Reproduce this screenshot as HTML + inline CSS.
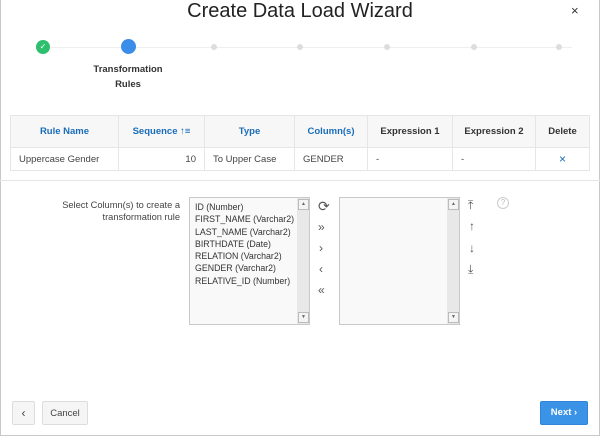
<!DOCTYPE html><html><head><style>
body{margin:0;width:600px;height:437px;background:#fff;font-family:"Liberation Sans",sans-serif;position:relative;overflow:hidden}
.frame{position:absolute;left:0;top:0;width:598px;height:435px;border:1px solid #c8c8c8;border-top:none}
.a{position:absolute}
h1{position:absolute;top:0;left:0;width:600px;text-align:center;margin:0;font-weight:normal;font-size:20px;color:#222;line-height:22px}
.dot{position:absolute;width:6px;height:6px;border-radius:3px;background:#ddd;top:44px}
table{position:absolute;left:10px;top:115px;width:580px;border-collapse:collapse;font-size:9.5px;table-layout:fixed}
td,th{border:1px solid #e6e6e6;padding:0 8px;overflow:hidden;white-space:nowrap}
th{background:#f7f7f7;color:#333;height:31px}
th.b{color:#1a6cb8}
td{height:22px;color:#444}
.lb{position:absolute;border:1px solid #c9c9c9;background:#f9f9f9;font-size:8.8px;color:#333;line-height:12.3px}
.sb{position:absolute;right:0;top:0;width:12px;height:100%;background:#e8e8e8}
.ar{position:absolute;left:1px;width:9px;height:9px;background:#f4f4f4;border:1px solid #bbb;font-size:5px;text-align:center;line-height:9px;color:#666}
.ic{position:absolute;font-size:12px;color:#555}
.btn{position:absolute;top:401px;height:22px;border:1px solid #ddd;border-radius:2px;background:#f5f5f5;font-size:9.5px;color:#444;text-align:center;line-height:22px}
</style></head><body><div class="frame"></div>
<h1>Create Data Load Wizard</h1>
<div class="a" style="left:571px;top:3px;font-size:13px;color:#333">×</div>
<div class="a" style="left:42px;top:47px;width:530px;height:1px;background:#eee"></div>
<div class="a" style="left:36px;top:40px;width:14px;height:14px;border-radius:7px;background:#2ebf6e;color:#fff;font-size:8px;text-align:center;line-height:14px">✓</div>
<div class="a" style="left:121px;top:39px;width:15px;height:15px;border-radius:8px;background:#3a8de8"></div>
<div class="dot" style="left:211px"></div><div class="dot" style="left:297px"></div><div class="dot" style="left:384px"></div><div class="dot" style="left:471px"></div><div class="dot" style="left:556px"></div>
<div class="a" style="left:78px;top:62px;width:100px;text-align:center;font-size:9.5px;font-weight:bold;color:#333;line-height:15px">Transformation<br>Rules</div>
<table><colgroup><col style="width:108px"><col style="width:86px"><col style="width:90px"><col style="width:73px"><col style="width:85px"><col style="width:83px"><col></colgroup>
<tr><th class="b">Rule Name</th><th class="b">Sequence ↑≡</th><th class="b">Type</th><th class="b">Column(s)</th><th>Expression 1</th><th>Expression 2</th><th>Delete</th></tr>
<tr><td>Uppercase Gender</td><td style="text-align:right">10</td><td>To Upper Case</td><td>GENDER</td><td>-</td><td>-</td><td style="text-align:center;color:#1a6cb8;font-size:12px">×</td></tr></table>
<div class="a" style="left:0;top:180px;width:600px;height:1px;background:#e5e5e5"></div>
<div class="a" style="left:40px;top:199px;width:140px;text-align:right;font-size:9.3px;color:#444;line-height:12px">Select Column(s) to create a<br>transformation rule</div>
<div class="lb" style="left:189px;top:197px;width:119px;height:126px"><div style="padding:3px 5px">ID (Number)<br>FIRST_NAME (Varchar2)<br>LAST_NAME (Varchar2)<br>BIRTHDATE (Date)<br>RELATION (Varchar2)<br>GENDER (Varchar2)<br>RELATIVE_ID (Number)</div><div class="sb"><div class="ar" style="top:1px">▲</div><div class="ar" style="bottom:1px">▼</div></div></div>
<div class="lb" style="left:339px;top:197px;width:119px;height:126px"><div class="sb"><div class="ar" style="top:1px">▲</div><div class="ar" style="bottom:1px">▼</div></div></div>
<div class="ic" style="left:318px;top:198px;font-size:14px">⟳</div>
<div class="ic" style="left:318px;top:220px">»</div>
<div class="ic" style="left:319px;top:241px">›</div>
<div class="ic" style="left:319px;top:262px">‹</div>
<div class="ic" style="left:318px;top:283px">«</div>
<div class="ic" style="left:468px;top:198px">⤒</div>
<div class="ic" style="left:469px;top:219px">↑</div>
<div class="ic" style="left:469px;top:241px">↓</div>
<div class="ic" style="left:468px;top:262px">⤓</div>
<div class="a" style="left:497px;top:197px;width:10px;height:10px;border:1px solid #ccc;border-radius:6px;font-size:8px;color:#bbb;text-align:center;line-height:10px">?</div>
<div class="btn" style="left:12px;width:21px;font-size:12px">‹</div>
<div class="btn" style="left:42px;width:44px;line-height:23px">Cancel</div>
<div class="btn" style="left:540px;width:46px;background:#3a93e6;border-color:#2f86d8;color:#fff;font-weight:bold">Next ›</div>
</body></html>
